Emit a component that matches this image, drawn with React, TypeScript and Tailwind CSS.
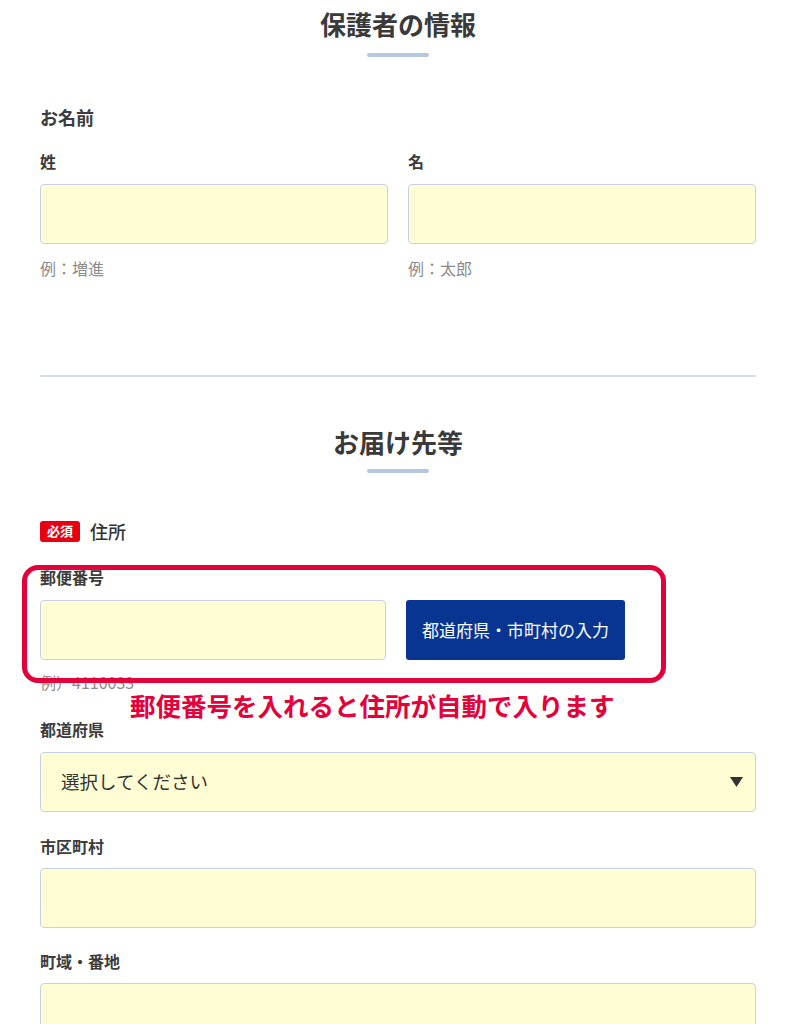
import React from 'react';

const font = { fontFamily: '"Noto Sans CJK JP", "Noto Sans", sans-serif' };

const SectionTitle: React.FC<{ title: string; className?: string; gap: string }> = ({ title, className, gap }) => (
  <div className={`flex flex-col items-center ${className ?? ''}`}>
    <h2 className="text-[26px] leading-[36px] font-bold text-[#3a3a3a]">{title}</h2>
    <div className={`${gap} h-1 w-[62px] rounded-full bg-[#b7c7e0]`} />
  </div>
);

const Label: React.FC<{ text: string; className?: string }> = ({ text, className }) => (
  <p className={`text-[16px] leading-[24px] font-bold text-[#3c3c3c] ${className ?? ''}`}>{text}</p>
);

const Field: React.FC<{ className?: string }> = ({ className }) => (
  <div className={`h-[60px] rounded-[4px] border border-[#c6d2e3] bg-[#fffdd3] ${className ?? ''}`} />
);

const Hint: React.FC<{ text: string; className?: string }> = ({ text, className }) => (
  <p className={`text-[16px] leading-[24px] text-[#8c8c8c] ${className ?? 'mt-3'}`}>{text}</p>
);

export default function App() {
  return (
    <div className="relative min-h-[1024px] w-[799px] overflow-hidden bg-white" style={font}>
      <div className="ml-10 w-[716px] pt-[6px]">
        <SectionTitle title="保護者の情報" gap="mt-[11px]" />

        <p className="mt-[48px] text-[18px] leading-[24px] font-bold text-[#3c3c3c]">お名前</p>
        <div className="mt-5 grid grid-cols-2 gap-5">
          <div>
            <Label text="姓" />
            <Field className="mt-[11px]" />
            <Hint text="例：増進" />
          </div>
          <div>
            <Label text="名" />
            <Field className="mt-[11px]" />
            <Hint text="例：太郎" />
          </div>
        </div>

        <div className="mt-[95px] h-[2px] bg-[#d3dce8]" />

        <SectionTitle title="お届け先等" gap="mt-[9px]" className="mt-[47px]" />

        <div className="mt-[46px] flex h-6 items-center gap-[10px]">
          <span className="flex h-[21px] w-10 items-center justify-center rounded-[3px] bg-[#e60012] text-[13px] font-bold text-white">
            必須
          </span>
          <span className="text-[18px] font-medium text-[#333]">住所</span>
        </div>

        <Label text="郵便番号" className="mt-[22px]" />
        <div className="mt-[11px] flex gap-5">
          <Field className="w-[346px]" />
          <button className="h-[60px] w-[219px] rounded-[3px] bg-[#073591] text-[17px] text-white">
            都道府県・市町村の入力
          </button>
        </div>
        <Hint text="例）4110033" className="mt-[10px]" />

        <Label text="都道府県" className="mt-[23px]" />
        <div className="mt-[11px] flex h-[60px] items-center justify-between rounded-[4px] border border-[#c6d2e3] bg-[#fffdd3] pl-5 pr-3">
          <span className="text-[18.5px] text-[#333]">選択してください</span>
          <svg width="13" height="10" viewBox="0 0 13 10">
            <path d="M0 0 H13 L6.5 10 Z" fill="#333" />
          </svg>
        </div>

        <Label text="市区町村" className="mt-[22px]" />
        <Field className="mt-[10px]" />

        <Label text="町域・番地" className="mt-[21px]" />
        <Field className="mt-[10px]" />
      </div>

      {/* annotation overlay */}
      <div className="absolute left-[22px] top-[565px] h-[118px] w-[644px] rounded-[16px] border-[5px] border-[#e4003a]" />
      <p className="absolute left-[130px] top-[690px] text-[25.5px] leading-[30px] font-bold text-[#e4003a]">
        郵便番号を入れると住所が自動で入ります
      </p>

      <div className="pointer-events-none absolute bottom-0 left-0 h-[14px] w-full bg-gradient-to-b from-transparent to-black/5" />
    </div>
  );
}
